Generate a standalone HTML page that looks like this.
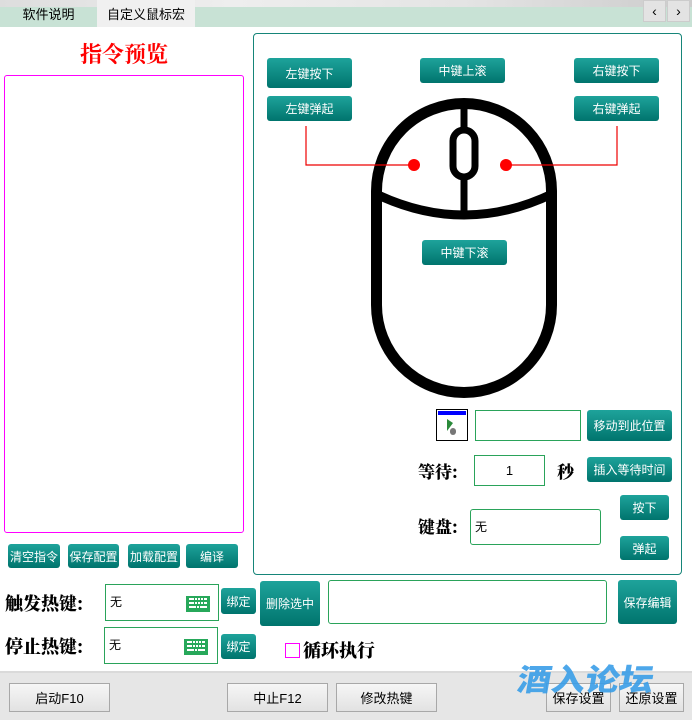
<!DOCTYPE html>
<html><head><meta charset="utf-8"><style>
*{margin:0;padding:0;box-sizing:border-box}
body{width:692px;height:720px;overflow:hidden;background:#fff;position:relative;font-family:"Liberation Sans","Noto Sans CJK SC",sans-serif;font-size:12px;color:#000}
.a{position:absolute}
.b{position:absolute;background:linear-gradient(#1ea39b,#00746d);color:#fff;border-radius:3px;display:flex;align-items:center;justify-content:center;font-size:12px;white-space:nowrap}
.in{position:absolute;border:1px solid #2aa35a;background:#fff}
.g{position:absolute;background:linear-gradient(#f6f6f6,#e2e2e2);border:1px solid #a8a8a8;display:flex;align-items:center;justify-content:center;font-size:13px}
.lbl{position:absolute;font-family:"Noto Serif CJK SC","Liberation Serif",serif;font-weight:900;font-size:17px;line-height:20px}
.kb{position:absolute;width:24px;height:16px;background:#27a85a;padding:2px 3px}
.kb i{display:block;height:2px;margin-bottom:2px;border-left:3px solid #fff;border-right:3px solid #fff;background:repeating-linear-gradient(90deg,#fff 0 2px,#27a85a 2px 3px)}
</style></head><body>
<div class="a" style="left:0;top:0;width:692px;height:8px;background:linear-gradient(90deg,#ddd,#eee,#e4e4e4,#ccc)"></div>
<div class="a" style="left:0;top:7px;width:692px;height:20px;background:#c8e2d5"></div>
<div class="a" style="left:0;top:0;width:97px;height:27px;display:flex;align-items:center;justify-content:center;font-size:13px">软件说明</div>
<div class="a" style="left:97px;top:0;width:98px;height:27px;background:#f0f0f0;display:flex;align-items:center;justify-content:center;font-size:13px">自定义鼠标宏</div>
<div class="a" style="left:643px;top:0;width:23px;height:22px;background:#e3e3e3;border:1px solid #ccc;text-align:center;font-size:14px;line-height:20px">&lsaquo;</div>
<div class="a" style="left:667px;top:0;width:23px;height:22px;background:#e3e3e3;border:1px solid #ccc;text-align:center;font-size:14px;line-height:20px">&rsaquo;</div>

<div class="a" style="left:0;top:38px;width:248px;text-align:center;color:#f00;font-family:'Liberation Serif','Noto Serif CJK SC',serif;font-weight:bold;font-size:22px">指令预览</div>
<div class="a" style="left:4px;top:75px;width:240px;height:458px;border:1px solid #f0f;border-radius:3px"></div>

<div class="a" style="left:253px;top:33px;width:429px;height:542px;border:1px solid #168579;border-radius:4px"></div>
<div class="b" style="left:267px;top:58px;width:85px;height:30px">左键按下</div>
<div class="b" style="left:267px;top:96px;width:85px;height:25px">左键弹起</div>
<div class="b" style="left:420px;top:58px;width:85px;height:25px">中键上滚</div>
<div class="b" style="left:574px;top:58px;width:85px;height:25px">右键按下</div>
<div class="b" style="left:574px;top:96px;width:85px;height:25px">右键弹起</div>

<svg class="a" style="left:0;top:0" width="692" height="720">
<path d="M376.5 191 A87.5 87.5 0 0 1 551.5 191 V305 A87.5 87.5 0 0 1 376.5 305 Z" fill="none" stroke="#000" stroke-width="11"/>
<path d="M376 194 Q464 236 552 194" fill="none" stroke="#000" stroke-width="9"/>
<line x1="464" y1="104" x2="464" y2="131" stroke="#000" stroke-width="7"/>
<line x1="464" y1="176" x2="464" y2="214" stroke="#000" stroke-width="7"/>
<rect x="453" y="130" width="22" height="47" rx="11" fill="#fff" stroke="#000" stroke-width="7"/>
<polyline points="306,126 306,165 414,165" fill="none" stroke="#e00" stroke-width="1.2"/>
<polyline points="617,126 617,165 506,165" fill="none" stroke="#e00" stroke-width="1.2"/>
<circle cx="414" cy="165" r="6" fill="#f00"/>
<circle cx="506" cy="165" r="6" fill="#f00"/>
</svg>
<div class="b" style="left:422px;top:240px;width:85px;height:25px">中键下滚</div>

<div class="a" style="left:436px;top:409px;width:32px;height:32px;border:1px solid #000;background:#fff"><div style="height:4px;background:#00f;margin:1px"></div><div style="position:absolute;left:10px;top:9px;width:0;height:0;border-left:6px solid #2a8a3a;border-top:4px solid transparent;border-bottom:8px solid transparent"></div><div style="position:absolute;left:13px;top:18px;width:6px;height:7px;background:#777;border-radius:3px"></div></div>
<div class="in" style="left:475px;top:410px;width:106px;height:31px"></div>
<div class="b" style="left:587px;top:410px;width:85px;height:31px">移动到此位置</div>
<div class="lbl" style="left:418px;top:461px">等待:</div>
<div class="in" style="left:474px;top:455px;width:71px;height:31px;text-align:center;line-height:29px;font-size:13px">1</div>
<div class="lbl" style="left:557px;top:461px">秒</div>
<div class="b" style="left:587px;top:457px;width:85px;height:25px">插入等待时间</div>
<div class="b" style="left:620px;top:495px;width:49px;height:25px">按下</div>
<div class="lbl" style="left:418px;top:516px">键盘:</div>
<div class="in" style="left:470px;top:509px;width:131px;height:36px;border-radius:3px;line-height:34px;padding-left:4px;font-size:12px">无</div>
<div class="b" style="left:620px;top:536px;width:49px;height:24px">弹起</div>

<div class="b" style="left:8px;top:544px;width:52px;height:24px">清空指令</div>
<div class="b" style="left:68px;top:544px;width:51px;height:24px">保存配置</div>
<div class="b" style="left:128px;top:544px;width:52px;height:24px">加载配置</div>
<div class="b" style="left:186px;top:544px;width:52px;height:24px">编译</div>

<div class="lbl" style="left:5px;top:593px;font-size:18px">触发热键:</div>
<div class="in" style="left:105px;top:584px;width:114px;height:37px;line-height:35px;padding-left:4px">无</div>
<div class="kb" style="left:186px;top:596px"><i></i><i></i><i style="border-width:0 5px"></i></div>
<div class="b" style="left:221px;top:588px;width:35px;height:26px">绑定</div>
<div class="b" style="left:260px;top:581px;width:60px;height:45px">删除选中</div>
<div class="in" style="left:328px;top:580px;width:279px;height:44px;border-radius:3px"></div>
<div class="b" style="left:618px;top:580px;width:59px;height:44px">保存编辑</div>
<div class="lbl" style="left:5px;top:636px;font-size:18px">停止热键:</div>
<div class="in" style="left:104px;top:627px;width:114px;height:37px;line-height:35px;padding-left:4px">无</div>
<div class="kb" style="left:184px;top:639px"><i></i><i></i><i style="border-width:0 5px"></i></div>
<div class="b" style="left:221px;top:634px;width:35px;height:25px">绑定</div>
<div class="a" style="left:285px;top:643px;width:15px;height:15px;border:1px solid #f0f"></div>
<div class="lbl" style="left:303px;top:640px;font-size:18px">循环执行</div>

<div class="a" style="left:0;top:671px;width:692px;height:49px;background:#e6e6e6;border-top:2px solid #dadada"></div>
<div class="g" style="left:9px;top:683px;width:101px;height:29px">启动F10</div>
<div class="g" style="left:227px;top:683px;width:101px;height:29px">中止F12</div>
<div class="g" style="left:336px;top:683px;width:101px;height:29px">修改热键</div>
<div class="g" style="left:546px;top:683px;width:65px;height:29px">保存设置</div>
<div class="g" style="left:619px;top:683px;width:65px;height:29px">还原设置</div>
<div class="a" style="left:518px;top:658px;font-size:34px;font-weight:900;color:#3a9ee8;letter-spacing:0;opacity:.9;font-family:'Noto Sans CJK SC',sans-serif;line-height:40px;transform:skewX(-10deg) scaleY(0.9)">酒入论坛</div>
</body></html>
